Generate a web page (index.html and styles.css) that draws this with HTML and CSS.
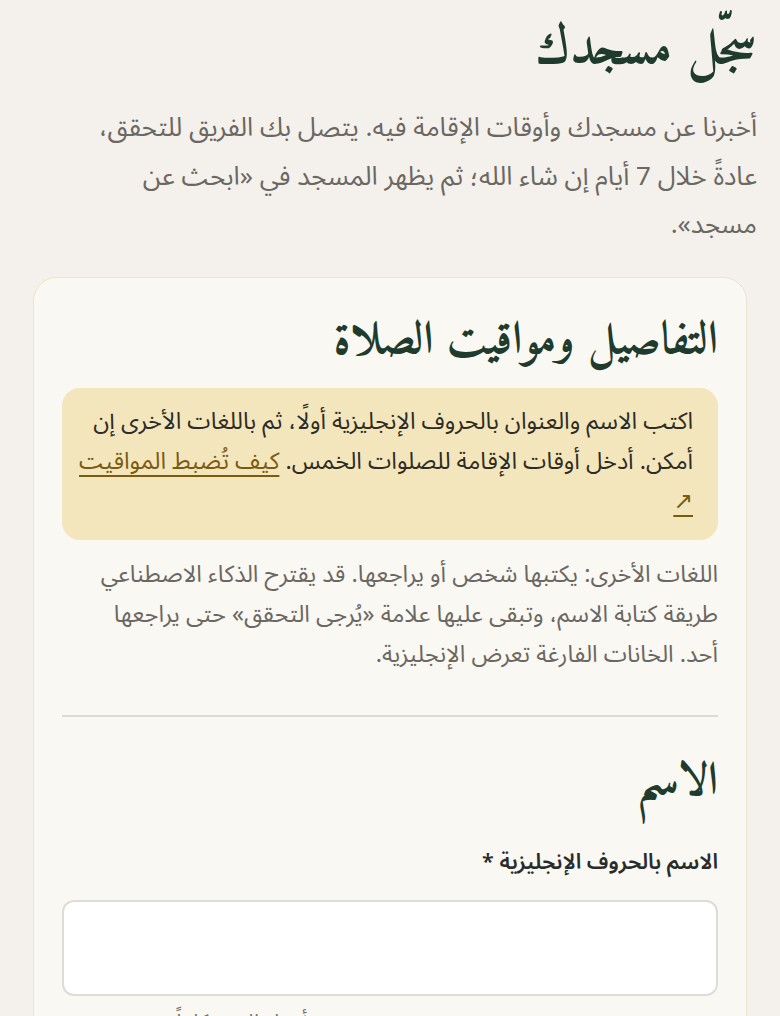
FILE: index.html
```html
<!DOCTYPE html>
<html lang="ar" dir="rtl">
<head>
<meta charset="utf-8">
<title>سجّل مسجدك</title>
<link rel="stylesheet" href="styles.css">
</head>
<body>
<main class="page">
  <header class="intro">
    <h1 class="title">سجّل مسجدك</h1>
    <p class="lead">أخبرنا عن مسجدك وأوقات الإقامة فيه. يتصل بك الفريق للتحقق، عادةً خلال 7 أيام إن شاء الله؛ ثم يظهر المسجد في «ابحث عن مسجد».</p>
  </header>
  <section class="card">
    <h2 class="card-title">التفاصيل ومواقيت الصلاة</h2>
    <div class="notice">اكتب الاسم والعنوان بالحروف الإنجليزية أولًا، ثم باللغات الأخرى إن أمكن. أدخل أوقات الإقامة للصلوات الخمس. <a class="link" href="#">كيف تُضبط المواقيت ↗</a></div>
    <p class="help">اللغات الأخرى: يكتبها شخص أو يراجعها. قد يقترح الذكاء الاصطناعي طريقة كتابة الاسم، وتبقى عليها علامة «يُرجى التحقق» حتى يراجعها أحد. الخانات الفارغة تعرض الإنجليزية.</p>
    <hr class="divider">
    <h2 class="section-title">الاسم</h2>
    <div class="field">
      <label class="label" for="name-en">الاسم بالحروف الإنجليزية *</label>
      <input class="input" id="name-en" type="text">
      <p class="hint">أدخل الاسم كاملًا</p>
    </div>
  </section>
</main>
</body>
</html>
```

FILE: styles.css
```css
html, body {
  margin: 0;
  padding: 0;
  background: #f4f1ec;
}
body {
  font-family: "Noto Sans Arabic", "Noto Sans", "DejaVu Sans", sans-serif;
  color: #2b2b2b;
}
.page {
  padding: 0 23px;
}
.intro {
  padding-top: 15px;
}
.title {
  margin: 0;
  font-family: "Amiri", "Noto Naskh Arabic", serif;
  font-size: 52px;
  font-weight: 700;
  line-height: 72px;
  color: #1e3b2d;
}
.lead {
  max-width: 690px;
  margin: 17px 0 0;
  font-size: 26px;
  line-height: 48.5px;
  color: #6b6762;
}
.card {
  margin: 27px 10px 0;
  background: #faf8f3;
  border: 1px solid #ece4cb;
  border-radius: 24px;
  padding: 34px 28px 40px;
}
.card-title, .section-title {
  margin: 0;
  font-family: "Amiri", "Noto Naskh Arabic", serif;
  font-size: 46px;
  font-weight: 700;
  line-height: 60px;
  color: #1e3b2d;
}
.notice {
  margin-top: 16px;
  background: #f3e6bc;
  border-radius: 18px;
  padding: 14px 25px 18px 12px;
  font-size: 23.5px;
  line-height: 40px;
  color: #2f2c25;
}
.link {
  color: #7a5b12;
  text-decoration: underline;
  text-decoration-thickness: 2px;
  text-underline-offset: 6px;
}
.help {
  max-width: 636px;
  margin: 15px 0 0;
  font-size: 23.5px;
  line-height: 40px;
  color: #6b6762;
}
.divider {
  margin: 40px 0 0;
  border: 0;
  border-top: 2px solid #dedbd5;
}
.section-title {
  margin-top: 36px;
}
.field {
  margin-top: 31px;
}
.label {
  display: block;
  font-size: 21.5px;
  font-weight: 600;
  line-height: 36px;
  color: #2b2b2b;
}
.input {
  display: block;
  box-sizing: border-box;
  width: 100%;
  height: 96px;
  margin-top: 20px;
  background: #ffffff;
  border: 2px solid #dedcd8;
  border-radius: 12px;
}
.hint {
  margin: 8px 0 0;
  padding-left: 108px;
  text-align: left;
  font-size: 21px;
  line-height: 36px;
  color: #7a7770;
}
```
